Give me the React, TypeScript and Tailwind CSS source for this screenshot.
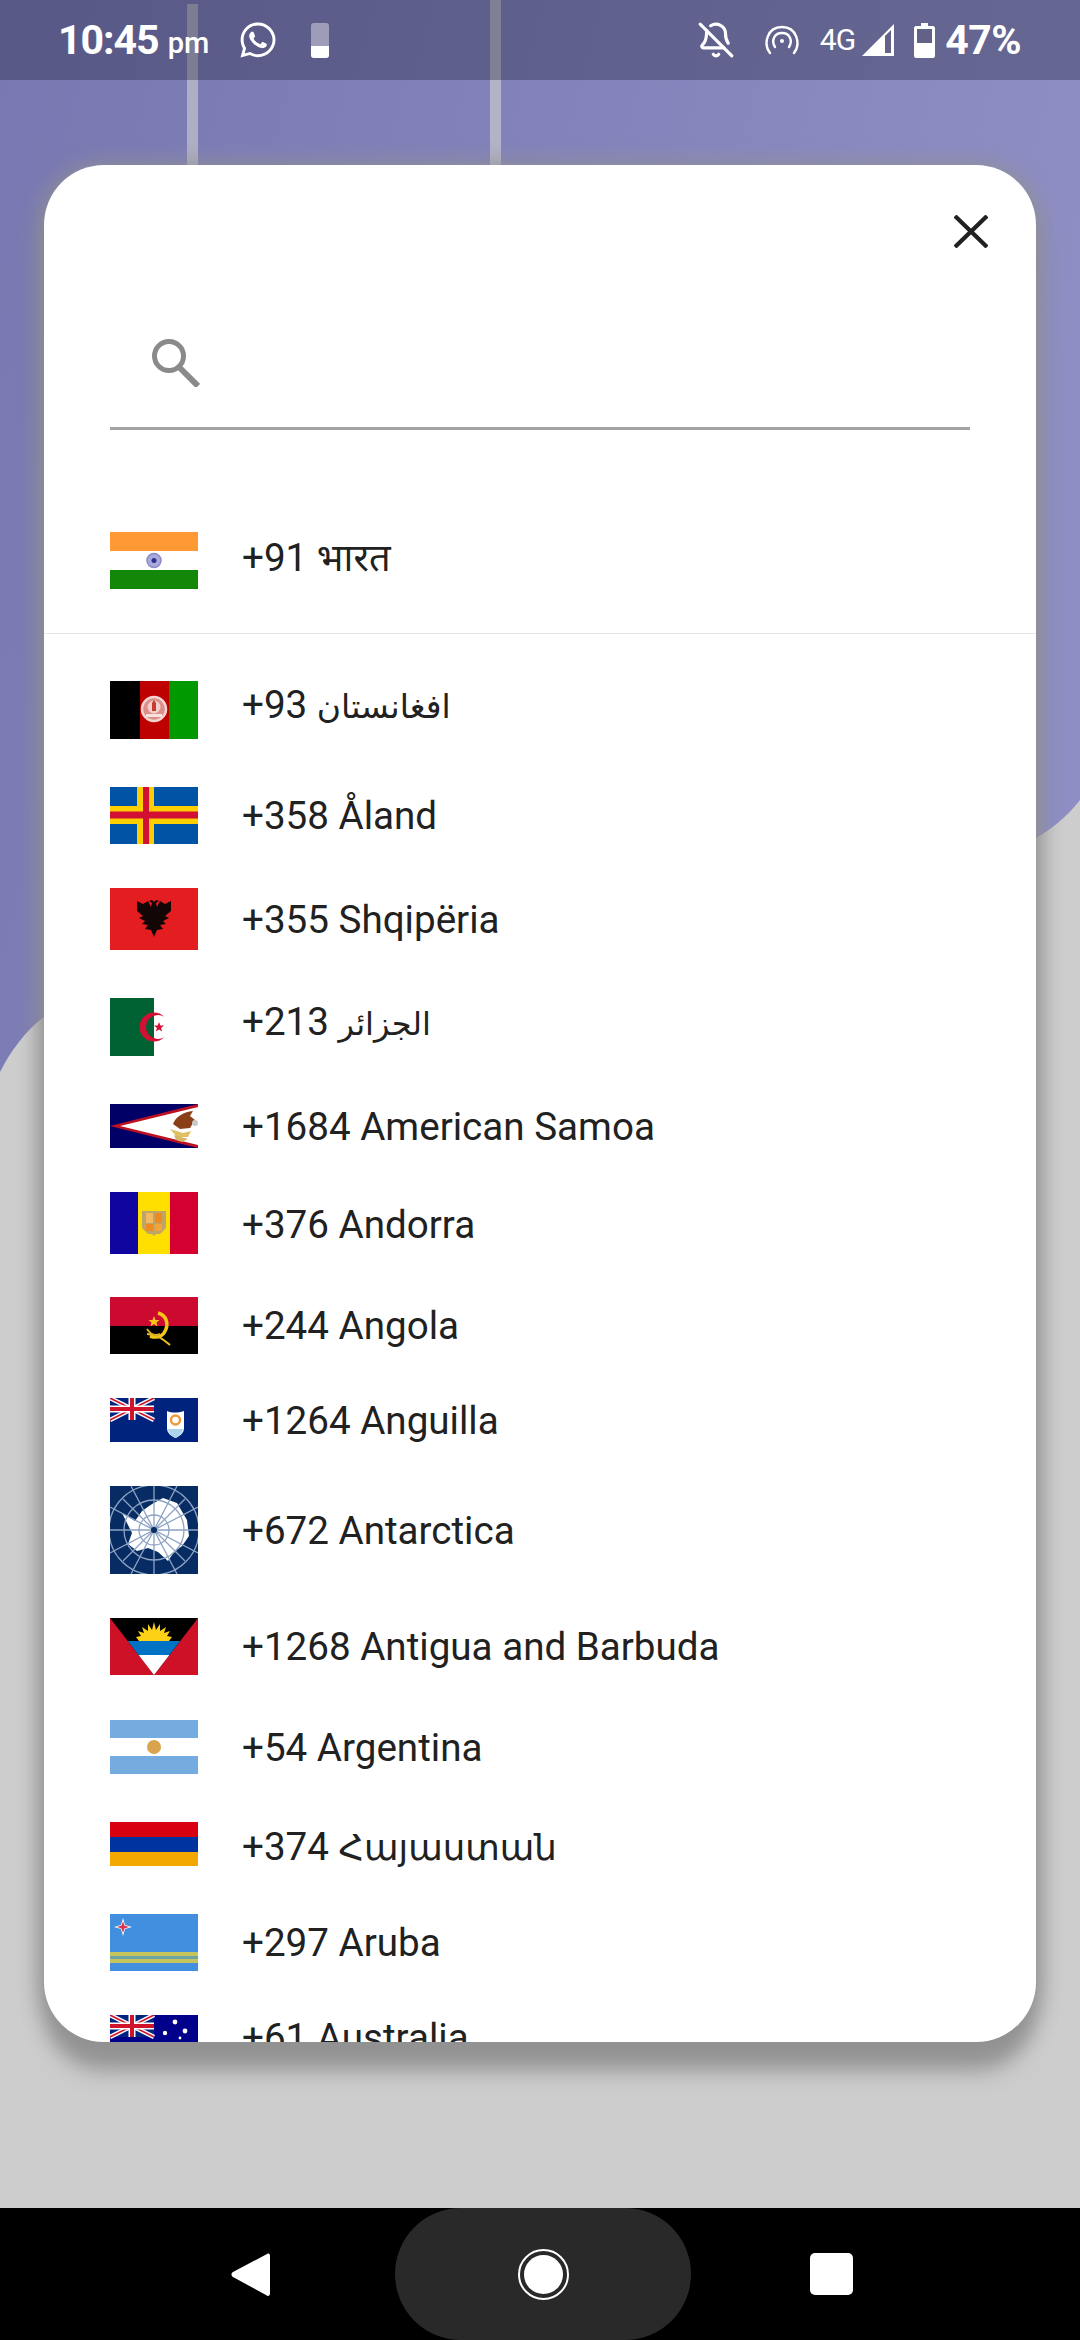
import { BellOff } from "lucide-react";
import { FaWhatsapp } from "react-icons/fa";

function UnionJack() {
  return (
    <g>
      <rect width="44" height="22" fill="#00247d" />
      <path d="M0 0L44 22M44 0L0 22" stroke="#fff" strokeWidth="4.5" />
      <path d="M0 0L44 22M44 0L0 22" stroke="#cf142b" strokeWidth="1.6" />
      <path d="M22 0V22M0 11H44" stroke="#fff" strokeWidth="7" />
      <path d="M22 0V22M0 11H44" stroke="#cf142b" strokeWidth="4" />
    </g>
  );
}

const flags = {
  india: (
    <>
      <rect width="88" height="19" fill="#ff9933" />
      <rect y="19" width="88" height="19" fill="#fff" />
      <rect y="38" width="88" height="19" fill="#138808" />
      <circle cx="44" cy="28.5" r="7" fill="#a9a9dc" stroke="#8b8bc8" strokeWidth="1.5" />
      <circle cx="44" cy="28.5" r="2.5" fill="#2f2f8f" />
    </>
  ),
  afghanistan: (
    <>
      <rect width="30" height="58" fill="#000" />
      <rect x="30" width="29" height="58" fill="#be0000" />
      <rect x="59" width="29" height="58" fill="#009900" />
      <circle cx="44" cy="28" r="12" fill="#dc8f88" stroke="#f4d4d0" strokeWidth="2.5" />
      <circle cx="44" cy="26" r="6.5" fill="#f2cfca" />
      <path d="M36 33H52V36H36Z" fill="#f6e2de" />
      <path d="M42 22L44 19L46 22V30H42Z" fill="#c93a30" />
    </>
  ),
  aland: (
    <>
      <rect width="88" height="57" fill="#0053a5" />
      <rect x="27" width="17" height="57" fill="#ffce00" />
      <rect y="19" width="88" height="18" fill="#ffce00" />
      <rect x="33" width="6" height="57" fill="#d21034" />
      <rect y="24.5" width="88" height="7" fill="#d21034" />
    </>
  ),
  albania: (
    <>
      <rect width="88" height="62" fill="#e41e20" />
      <path
        d="M44 49L41 42L35 41L38 37L32 36L35 33L29 30L33 28L27 23L27 13L33 16L38 13L41 19L42 15L39 13L42 12L44 14L46 12L49 13L46 15L47 19L50 13L55 16L61 13L61 23L55 28L59 30L53 33L56 36L50 37L53 41L47 42Z"
        fill="#120606"
      />
    </>
  ),
  algeria: (
    <>
      <rect width="88" height="58" fill="#fff" />
      <rect width="44" height="58" fill="#006233" />
      <path d="M54.28 18.78A14.5 14.5 0 1 0 54.28 39.22A12 12 0 1 1 54.28 18.78Z" fill="#d21034" />
      <path d="M49 24L50.3 27.6L54 27.6L51 30L52.2 33.6L49 31.4L45.8 33.6L47 30L44 27.6L47.7 27.6Z" fill="#d21034" />
    </>
  ),
  samoa: (
    <>
      <rect width="88" height="44" fill="#000066" />
      <path d="M88 0V44L0 22Z" fill="#bd1021" />
      <path d="M88 3V41L10 22Z" fill="#fff" />
      <path d="M63 20C66 12 74 8 83 7L80 12L85 16L80 24L70 25Z" fill="#8a3f17" />
      <path d="M60 25L67 33L78 33L81 27L73 29Z" fill="#e0c060" />
      <path d="M64 31L78 35L72 38L66 36Z" fill="#d4b868" />
      <circle cx="85" cy="19" r="3" fill="#c9c9c9" />
    </>
  ),
  andorra: (
    <>
      <rect width="28" height="62" fill="#10069f" />
      <rect x="28" width="32" height="62" fill="#fedf00" />
      <rect x="60" width="28" height="62" fill="#d50032" />
      <path d="M32 19H56V36L50 42H46L44 44L42 42H38L32 36Z" fill="#bda468" />
      <rect x="36" y="21" width="7" height="10" fill="#f4b860" />
      <rect x="45" y="21" width="7" height="10" fill="#ee8a1e" />
      <rect x="36" y="32" width="7" height="7" fill="#ee8a1e" />
      <rect x="45" y="32" width="7" height="7" fill="#f2a33a" />
    </>
  ),
  angola: (
    <>
      <rect width="88" height="29" fill="#cc092f" />
      <rect y="29" width="88" height="28" fill="#000" />
      <path d="M48 16C56 18 60 27 54 36C51 40 46 41 40 39" fill="none" stroke="#f5c518" strokeWidth="3.5" />
      <path d="M37 37C42 37 50 39 60 48" fill="none" stroke="#e8c020" strokeWidth="2" />
      <path d="M37 32C41 38 46 39 50 37" fill="none" stroke="#d8b020" strokeWidth="2" />
      <path d="M44 19L45.5 23H49.5L46.5 25.5L47.5 29.5L44 27L40.5 29.5L41.5 25.5L38.5 23H42.5Z" fill="#f5c518" />
    </>
  ),
  anguilla: (
    <>
      <rect width="88" height="44" fill="#00247d" />
      <UnionJack />
      <path d="M57 13C62 15 67 15 74 13V30C74 35 70 38 65.5 40C61 38 57 35 57 30Z" fill="#fff" />
      <path d="M58 31H73C72 36 69 38 65.5 40C62 38 59 36 58 31Z" fill="#a9d4ee" />
      <circle cx="65.5" cy="22" r="4.5" fill="none" stroke="#ee9a3c" strokeWidth="2.5" />
    </>
  ),
  antarctica: (
    <>
      <rect width="88" height="88" fill="#072c63" />
      <path
        d="M12 27L25 35L32 25L42 18L53 12L67 17L77 34L79 50L72 60L64 66L58 75L48 66L38 62L27 65L18 58L22 47L18 39Z"
        fill="#fff"
      />
      <g fill="none" stroke="#8ea3c4" strokeWidth="1.3">
        <circle cx="44" cy="44" r="15" />
        <circle cx="44" cy="44" r="30" />
        <circle cx="44" cy="44" r="45" />
        <path d="M44 0V88M0 44H88M13 13L75 75M75 13L13 75M21 0L67 88M67 0L21 88M0 21L88 67M0 67L88 21" />
      </g>
      <circle cx="44" cy="44" r="3" fill="#072c63" />
    </>
  ),
  antigua: (
    <>
      <rect width="88" height="57" fill="#ce1126" />
      <path d="M0 0H88L44 57Z" fill="#000" />
      <path d="M17.8 23H70.2L59.4 37H28.6Z" fill="#0072c6" />
      <path d="M28.6 37H59.4L44 57Z" fill="#fff" />
      <path d="M44 4L46 12L50 6L50 13L56 9L54 15L60 13L57 18L62 19L59 23H29L26 19L31 18L28 13L34 15L32 9L38 13L38 6L42 12Z" fill="#fcd116" />
    </>
  ),
  argentina: (
    <>
      <rect width="88" height="54" fill="#74acdf" />
      <rect y="18" width="88" height="18" fill="#fff" />
      <circle cx="44" cy="27" r="7" fill="#d9a44e" />
    </>
  ),
  armenia: (
    <>
      <rect width="88" height="15" fill="#d90012" />
      <rect y="15" width="88" height="15" fill="#0033a0" />
      <rect y="30" width="88" height="14" fill="#f2a800" />
    </>
  ),
  aruba: (
    <>
      <rect width="88" height="57" fill="#418fde" />
      <rect y="38" width="88" height="4" fill="#c6c45c" />
      <rect y="42" width="88" height="3" fill="#6ea5a4" />
      <rect y="45" width="88" height="4" fill="#c6c45c" />
      <path d="M13 4L15 11L22 13L15 15L13 22L11 15L4 13L11 11Z" fill="#fff" />
      <path d="M13 7L14.4 11.6L19 13L14.4 14.4L13 19L11.6 14.4L7 13L11.6 11.6Z" fill="#d8344f" />
    </>
  ),
  australia: (
    <>
      <rect width="88" height="44" fill="#00008b" />
      <UnionJack />
      <circle cx="65" cy="7" r="2.4" fill="#fff" />
      <circle cx="55" cy="18" r="2.2" fill="#fff" />
      <circle cx="75" cy="16" r="2.4" fill="#fff" />
      <circle cx="70" cy="23" r="1.4" fill="#fff" />
      <circle cx="65" cy="36" r="2.4" fill="#fff" />
      <circle cx="22" cy="33" r="3" fill="#fff" />
    </>
  ),
};

const countries = [
  { flag: flags.afghanistan, size: "h-[58px]", space: "mb-[48px]", code: "+93", name: "افغانستان", nameClass: "text-[33px]", lift: "pb-[9px]", view: "0 0 88 58" },
  { flag: flags.aland, size: "h-[57px]", space: "mb-[44px]", code: "+358", name: "Åland", view: "0 0 88 57" },
  { flag: flags.albania, size: "h-[62px]", space: "mb-[48px]", code: "+355", name: "Shqipëria", lift: "pt-[2px]", view: "0 0 88 62" },
  { flag: flags.algeria, size: "h-[58px]", space: "mb-[48px]", code: "+213", name: "الجزائر", nameClass: "text-[32px]", lift: "pb-[9px]", view: "0 0 88 58" },
  { flag: flags.samoa, size: "h-[44px]", space: "mb-[44px]", code: "+1684", name: "American Samoa", lift: "pt-[2px]", view: "0 0 88 44" },
  { flag: flags.andorra, size: "h-[62px]", space: "mb-[43px]", code: "+376", name: "Andorra", lift: "pt-[4px]", view: "0 0 88 62" },
  { flag: flags.angola, size: "h-[57px]", space: "mb-[44px]", code: "+244", name: "Angola", view: "0 0 88 57" },
  { flag: flags.anguilla, size: "h-[44px]", space: "mb-[44px]", code: "+1264", name: "Anguilla", lift: "pt-[2px]", view: "0 0 88 44" },
  { flag: flags.antarctica, size: "h-[88px]", space: "mb-[44px]", code: "+672", name: "Antarctica", lift: "pt-[2px]", view: "0 0 88 88" },
  { flag: flags.antigua, size: "h-[57px]", space: "mb-[45px]", code: "+1268", name: "Antigua and Barbuda", view: "0 0 88 57" },
  { flag: flags.argentina, size: "h-[54px]", space: "mb-[48px]", code: "+54", name: "Argentina", lift: "pt-[2px]", view: "0 0 88 54" },
  { flag: flags.armenia, size: "h-[44px]", space: "mb-[48px]", code: "+374", name: "Հայաստան", nameClass: "text-[35.5px]", lift: "pt-[6px]", view: "0 0 88 44" },
  { flag: flags.aruba, size: "h-[57px]", space: "mb-[44px]", code: "+297", name: "Aruba", view: "0 0 88 57" },
  { flag: flags.australia, size: "h-[44px]", space: "mb-[44px]", code: "+61", name: "Australia", lift: "pt-[2px]", view: "0 0 88 44" },
];

type RowProps = {
  flag: React.ReactNode;
  size: string;
  code: string;
  name: string;
  nameClass?: string;
  lift?: string;
  view: string;
  space?: string;
};

function CountryRow({ flag, size, code, name, nameClass, lift, view, space }: RowProps) {
  return (
    <div className={`flex items-center gap-[44px] px-[66px] ${space ?? ""}`}>
      <svg viewBox={view} className={`w-[88px] shrink-0 ${size}`}>
        {flag}
      </svg>
      <span className={`whitespace-nowrap text-[38.6px] leading-[36px] text-[#212121] ${lift ?? ""}`}>
        {code} <span className={nameClass}>{name}</span>
      </span>
    </div>
  );
}

function Background() {
  return (
    <svg viewBox="0 0 1080 2208" className="absolute left-0 top-0 h-[2208px] w-[1080px]">
      <defs>
        <linearGradient id="wave" x1="0" y1="0" x2="1" y2="0.25">
          <stop offset="0" stopColor="#7878b2" />
          <stop offset="1" stopColor="#8e8ec4" />
        </linearGradient>
      </defs>
      <path d="M0 0H1080V800C1066 818 1050 830 1036 838L44 1017C26 1030 10 1052 0 1072Z" fill="url(#wave)" />
      <rect x="187" y="4" width="11" height="170" fill="#aeaec4" />
      <rect x="490" y="0" width="11" height="170" fill="#b2b2c8" />
    </svg>
  );
}

function StatusBar() {
  return (
    <div className="relative flex h-[80px] items-center justify-between bg-[#20203a]/35 pl-[58px] pr-[59px] text-white">
      <div className="flex items-center">
        <span className="text-[41px] font-bold leading-none tracking-[-1px]">10:45</span>
        <span className="ml-[9px] mt-[6px] text-[29px] font-medium leading-none">pm</span>
        <FaWhatsapp className="ml-[29px] h-[40px] w-[40px]" />
        <div className="ml-[33px] flex h-[35px] w-[18px] flex-col justify-end overflow-hidden rounded-[3px] bg-white/40">
          <div className="h-[12px] bg-white" />
        </div>
      </div>
      <div className="flex items-center">
        <BellOff className="h-[38px] w-[38px]" strokeWidth={2} />
        <svg viewBox="0 0 36 30" className="ml-[29px] h-[30px] w-[36px]" fill="none" stroke="#fff" strokeWidth="2.4" strokeLinecap="round">
          <path d="M6 28C-1 19 3 2 18 2C33 2 37 19 30 28" />
          <path d="M11 22C7 16 10 8 18 8C26 8 29 16 25 22" />
          <circle cx="18" cy="16" r="2" fill="#fff" stroke="none" />
        </svg>
        <span className="ml-[20px] text-[30px] leading-none tracking-[-1px]">4G</span>
        <svg viewBox="0 0 32 32" className="ml-[7px] h-[32px] w-[32px]">
          <path d="M0 32L32 0V32Z" fill="#fff" />
          <path d="M23 12L29 6V29H23Z" fill="#626289" />
        </svg>
        <svg viewBox="0 0 21 35" className="ml-[20px] h-[35px] w-[21px]">
          <path d="M7 0H14V3H19C20 3 21 4 21 5V33C21 34 20 35 19 35H2C1 35 0 34 0 33V5C0 4 1 3 2 3H7Z" fill="#fff" />
          <rect x="3" y="6" width="15" height="14" fill="#626289" />
        </svg>
        <span className="ml-[10px] text-[41px] font-bold leading-none tracking-[-0.5px]">47%</span>
      </div>
    </div>
  );
}

function NavBar() {
  return (
    <div className="relative flex h-[132px] bg-black">
      <div className="flex flex-1 items-center justify-end pr-[125px]">
        <svg viewBox="0 0 39 45" className="h-[45px] w-[39px]">
          <path d="M36 2C38 1 39 2 39 4V41C39 44 37 45 35 43L2 25C0 24 0 21 2 20Z" fill="#fff" />
        </svg>
      </div>
      <div className="flex h-[132px] w-[296px] items-center justify-center rounded-[66px] bg-[#292929]">
        <div className="flex h-[51px] w-[51px] items-center justify-center rounded-full border-[2px] border-white">
          <div className="h-[39px] w-[39px] rounded-full bg-white" />
        </div>
      </div>
      <div className="flex flex-1 items-center pl-[119px]">
        <div className="h-[42px] w-[43px] rounded-[5px] bg-white" />
      </div>
    </div>
  );
}

export default function App() {
  return (
    <div className="relative flex h-[2340px] w-[1080px] flex-col overflow-hidden bg-[#cdcdcd] font-['Roboto','Noto_Sans','DejaVu_Sans',sans-serif]">
      <Background />
      <StatusBar />
      <main className="relative flex-1 px-[44px] pt-[85px]">
        <div className="h-[1877px] overflow-hidden rounded-[60px] bg-white shadow-[0_4px_22px_4px_rgba(145,145,145,1),0_32px_22px_-4px_rgba(130,130,130,0.75)]">
          <div className="flex justify-end pr-[48px] pt-[50px]">
            <svg viewBox="0 0 34 33" className="h-[33px] w-[34px]" fill="none" stroke="#212121" strokeWidth="4.2">
              <path d="M1 1L33 32M33 1L1 32" />
            </svg>
          </div>
          <div className="mx-[66px] border-b-[3px] border-[#a3a3a3] pb-[40px] pl-[42px] pt-[91px]">
            <svg viewBox="0 0 48 48" className="h-[48px] w-[48px]" fill="none" stroke="#8a8a8a" strokeWidth="5">
              <circle cx="17" cy="17" r="14.5" />
              <path d="M27 28L46 47" strokeWidth="6" />
            </svg>
          </div>
          <div className="mt-[102px]">
            <CountryRow flag={flags.india} size="h-[57px]" view="0 0 88 57" code="+91" name="भारत" nameClass="text-[38px]" lift="pb-[6px]" />
          </div>
          <div className="mb-[47px] mt-[44px] h-[1px] bg-[#e6e6e6]" />
          {countries.map((country) => (
            <CountryRow
              key={country.code}
              flag={country.flag}
              size={country.size}
              view={country.view}
              code={country.code}
              name={country.name}
              nameClass={country.nameClass}
              lift={country.lift}
              space={country.space}
            />
          ))}
        </div>
      </main>
      <NavBar />
    </div>
  );
}
